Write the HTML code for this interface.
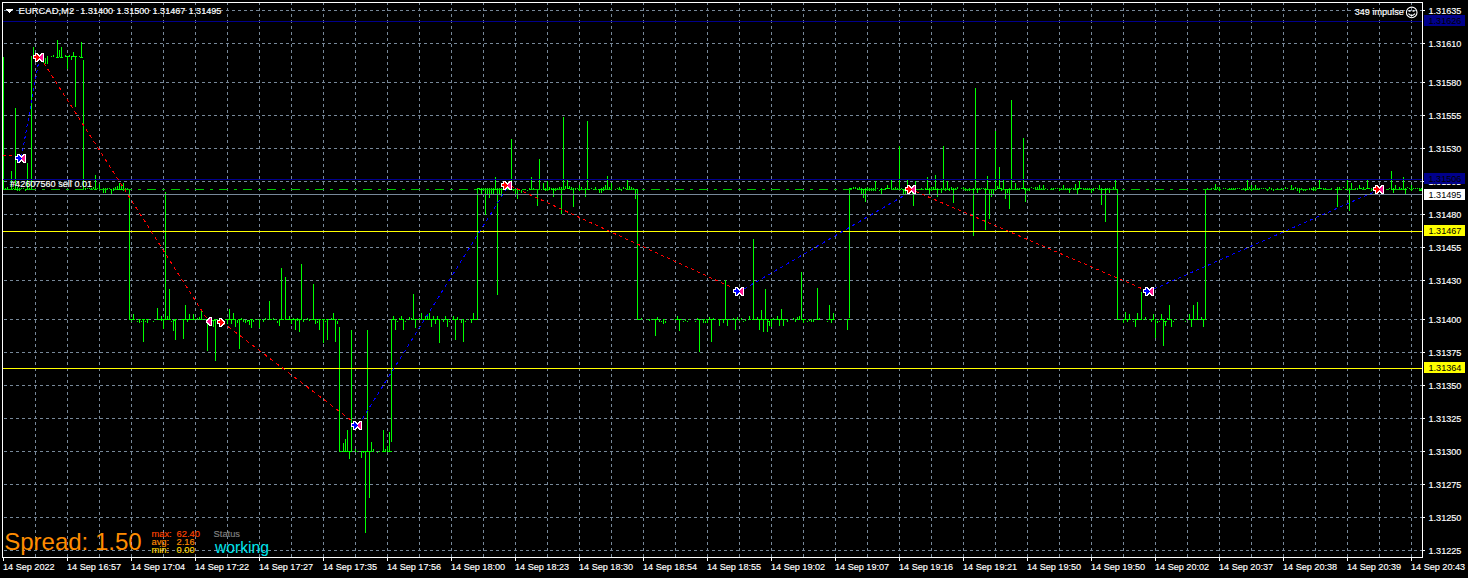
<!DOCTYPE html>
<html lang="en"><head><meta charset="utf-8"><title>EURCAD,M2</title>
<style>
html,body{margin:0;padding:0;background:#000;overflow:hidden}
body{width:1468px;height:578px;position:relative}
svg{position:absolute;left:0;top:0;display:block}
text{font-family:"Liberation Sans",sans-serif;white-space:pre}
</style></head><body>
<svg width="1468" height="578" viewBox="0 0 1468 578" shape-rendering="crispEdges">
<rect width="1468" height="578" fill="#000"/>
<path d="M4 10.5H1422M4 43.5H1422M4 82.5H1422M4 115.5H1422M4 148.5H1422M4 181.5H1422M4 214.5H1422M4 247.5H1422M4 280.5H1422M4 319.5H1422M4 352.5H1422M4 385.5H1422M4 418.5H1422M4 451.5H1422M4 484.5H1422M4 517.5H1422M4 550.5H1422M35.5 2V557M67.5 2V557M99.5 2V557M131.5 2V557M163.5 2V557M195.5 2V557M227.5 2V557M259.5 2V557M291.5 2V557M323.5 2V557M355.5 2V557M387.5 2V557M419.5 2V557M451.5 2V557M483.5 2V557M515.5 2V557M547.5 2V557M579.5 2V557M611.5 2V557M643.5 2V557M675.5 2V557M707.5 2V557M739.5 2V557M771.5 2V557M803.5 2V557M835.5 2V557M867.5 2V557M899.5 2V557M931.5 2V557M963.5 2V557M995.5 2V557M1027.5 2V557M1059.5 2V557M1091.5 2V557M1123.5 2V557M1155.5 2V557M1187.5 2V557M1219.5 2V557M1251.5 2V557M1283.5 2V557M1315.5 2V557M1347.5 2V557M1379.5 2V557M1411.5 2V557" stroke="#778899" stroke-dasharray="3 3" fill="none"/>
<path d="M3.5 57V190M11.5 171V190M15.5 108V190M27.5 163V190M31.5 56V190M33.5 47V57M43.5 58V63M45.5 58V64M47.5 56V64M51.5 56V57M53.5 55V57M57.5 40V58M59.5 50V57M61.5 47V58M65.5 55V57M67.5 56V69M69.5 55V57M71.5 56V60M73.5 52V57M75.5 56V107M79.5 56V57M81.5 42V58M83.5 60V190M95.5 175V190M99.5 184V190M103.5 188V193M105.5 188V193M107.5 188V190M111.5 189V194M113.5 188V191M115.5 187V190M117.5 186V190M119.5 183V190M121.5 185V190M123.5 183V191M125.5 188V190M129.5 189V320M7.5 187V190M17.5 187V191M19.5 188V191M25.5 189V191M29.5 188V190M133.5 314V320M139.5 319V323M143.5 319V342M147.5 319V323M153.5 321V322M157.5 308V320M161.5 316V321M163.5 319V329M165.5 192V320M167.5 316V320M169.5 289V320M173.5 320V331M175.5 319V340M183.5 319V339M185.5 305V320M187.5 319V322M189.5 314V320M193.5 314V320M197.5 318V320M199.5 317V320M201.5 309V320M207.5 319V351M213.5 320V327M215.5 319V361M227.5 319V324M229.5 309V320M231.5 319V324M233.5 313V320M235.5 319V327M237.5 320V323M239.5 319V349M241.5 318V320M243.5 319V322M245.5 320V323M247.5 320V322M249.5 320V325M251.5 319V328M253.5 320V322M259.5 319V328M263.5 319V322M265.5 318V320M269.5 301V320M273.5 318V320M277.5 321V323M279.5 319V326M281.5 268V320M285.5 277V320M289.5 316V320M291.5 319V324M293.5 318V320M295.5 319V330M297.5 318V321M299.5 319V332M301.5 264V320M303.5 319V322M307.5 318V320M313.5 284V320M315.5 319V324M317.5 321V323M319.5 319V330M323.5 319V343M325.5 321V322M327.5 319V340M331.5 318V320M333.5 313V320M335.5 319V342M337.5 321V324M339.5 327V452M343.5 443V452M345.5 439V452M347.5 430V452M349.5 451V459M351.5 330V452M355.5 449V452M361.5 451V458M365.5 451V533M367.5 330V452M369.5 451V498M371.5 442V452M373.5 449V452M377.5 452V453M383.5 430V452M385.5 449V452M387.5 446V452M389.5 432V452M391.5 319V442M393.5 316V320M395.5 319V330M397.5 321V322M399.5 318V320M401.5 316V320M403.5 319V330M405.5 321V322M409.5 317V320M413.5 294V320M415.5 319V328M419.5 318V320M421.5 313V320M425.5 316V320M427.5 314V320M429.5 313V320M431.5 319V327M433.5 316V320M435.5 319V324M437.5 316V320M439.5 319V343M443.5 319V322M445.5 316V320M447.5 319V327M449.5 321V322M453.5 316V320M455.5 319V340M457.5 317V320M461.5 320V323M463.5 319V342M465.5 321V322M471.5 319V323M473.5 313V320M477.5 188V320M481.5 188V195M485.5 188V215M487.5 188V194M489.5 188V198M491.5 188V194M493.5 188V195M495.5 177V190M497.5 188V295M499.5 188V194M501.5 188V197M511.5 139V190M515.5 189V195M517.5 188V199M521.5 190V193M527.5 190V191M529.5 188V190M531.5 177V190M533.5 188V190M537.5 189V206M539.5 159V190M543.5 183V190M545.5 188V191M547.5 181V191M549.5 187V190M553.5 188V197M555.5 188V191M559.5 187V190M561.5 187V214M563.5 117V190M565.5 186V189M567.5 180V189M569.5 186V189M571.5 187V190M573.5 188V207M577.5 188V189M579.5 185V191M581.5 187V190M585.5 188V197M587.5 121V190M595.5 187V190M599.5 189V193M601.5 188V193M603.5 187V191M605.5 185V190M607.5 176V190M609.5 187V190M611.5 183V190M619.5 187V190M623.5 187V189M627.5 180V190M629.5 186V190M631.5 187V190M633.5 188V190M635.5 189V199M637.5 189V320M641.5 318V320M655.5 319V336M657.5 317V320M659.5 319V322M661.5 321V322M663.5 319V324M665.5 321V323M677.5 316V320M679.5 319V331M697.5 318V320M699.5 319V352M703.5 319V323M705.5 321V323M707.5 319V323M709.5 317V320M711.5 319V342M719.5 319V326M723.5 319V323M725.5 280V320M727.5 319V326M733.5 318V320M735.5 319V330M737.5 317V320M741.5 318V320M749.5 316V320M753.5 239V320M757.5 317V320M759.5 319V330M761.5 310V320M763.5 319V332M765.5 289V320M767.5 319V332M769.5 321V326M771.5 319V327M773.5 318V320M777.5 316V320M779.5 319V326M781.5 309V320M783.5 319V326M787.5 319V322M793.5 318V320M795.5 319V322M797.5 317V320M799.5 316V320M801.5 272V320M803.5 319V323M811.5 319V322M813.5 319V322M817.5 288V320M829.5 305V320M831.5 319V323M833.5 313V320M847.5 319V330M849.5 188V318M853.5 187V189M855.5 187V189M859.5 187V190M861.5 188V195M863.5 189V198M865.5 188V202M867.5 187V191M869.5 188V191M871.5 188V191M873.5 188V191M875.5 181V191M877.5 188V189M879.5 190V191M881.5 188V195M887.5 185V189M891.5 180V190M895.5 187V190M897.5 188V190M899.5 146V190M903.5 189V194M905.5 190V195M907.5 180V190M913.5 193V206M915.5 181V190M925.5 188V190M927.5 177V190M929.5 188V194M931.5 187V191M933.5 187V190M935.5 175V190M937.5 188V197M941.5 188V193M943.5 146V190M945.5 188V191M947.5 181V190M949.5 188V191M951.5 187V190M953.5 188V203M965.5 188V191M967.5 189V191M969.5 188V191M973.5 188V236M975.5 88V189M977.5 188V193M985.5 188V230M987.5 176V190M989.5 189V219M991.5 189V197M993.5 189V195M995.5 131V190M997.5 186V189M999.5 167V189M1001.5 188V191M1003.5 180V190M1005.5 189V199M1007.5 189V193M1009.5 188V209M1011.5 100V190M1015.5 183V190M1017.5 188V190M1019.5 188V190M1023.5 138V189M1025.5 188V202M1027.5 188V191M1029.5 188V191M1031.5 187V188M1035.5 187V190M1039.5 185V190M1043.5 185V190M1059.5 188V191M1063.5 185V190M1069.5 188V193M1075.5 184V190M1077.5 188V194M1079.5 181V189M1081.5 188V189M1091.5 189V193M1093.5 188V191M1095.5 188V189M1099.5 185V190M1101.5 188V205M1105.5 188V222M1109.5 188V193M1115.5 180V190M1117.5 189V320M1123.5 319V323M1125.5 312V320M1127.5 319V322M1129.5 314V320M1133.5 321V322M1135.5 319V327M1137.5 313V320M1141.5 292V320M1145.5 317V320M1151.5 319V322M1153.5 314V320M1155.5 319V338M1157.5 321V323M1161.5 314V320M1163.5 319V346M1165.5 321V326M1167.5 318V320M1169.5 305V320M1171.5 319V327M1173.5 321V322M1189.5 314V320M1191.5 319V327M1193.5 305V320M1197.5 302V320M1201.5 317V320M1203.5 319V327M1205.5 189V320M1215.5 184V190M1219.5 187V191M1245.5 188V191M1247.5 180V190M1251.5 185V191M1255.5 185V190M1291.5 185V190M1295.5 187V189M1297.5 188V191M1299.5 188V193M1313.5 187V191M1315.5 187V191M1319.5 180V189M1337.5 187V207M1339.5 187V190M1343.5 187V188M1347.5 180V190M1349.5 188V211M1351.5 183V190M1359.5 185V189M1363.5 187V190M1367.5 180V189M1371.5 188V191M1391.5 171V190M1393.5 188V193M1395.5 185V190M1403.5 177V190M1405.5 188V195M1407.5 187V188M1411.5 185V191M1415.5 188V189M5.5 188V189M9.5 189V190M13.5 188V189M21.5 188V189M23.5 188V189M85.5 188V190M87.5 188V189M89.5 188V189M91.5 188V189M93.5 187V189M97.5 188V189M109.5 188V189M127.5 188V189M131.5 321V322M137.5 321V322M141.5 321V322M145.5 321V322M159.5 319V320M171.5 321V322M181.5 319V320M195.5 319V320M205.5 319V320M209.5 319V320M217.5 319V320M219.5 319V320M221.5 319V320M225.5 319V320M255.5 319V320M257.5 319V320M267.5 319V320M271.5 319V320M275.5 319V320M283.5 319V320M287.5 319V320M305.5 319V320M309.5 319V321M311.5 319V320M357.5 451V452M363.5 451V453M379.5 451V452M407.5 319V320M411.5 318V320M417.5 319V320M423.5 319V320M441.5 319V320M459.5 319V320M467.5 319V320M475.5 319V320M479.5 189V190M483.5 188V190M503.5 188V190M507.5 188V189M509.5 189V190M513.5 189V191M519.5 189V191M523.5 189V190M525.5 189V190M535.5 189V190M541.5 189V190M551.5 188V190M557.5 188V190M575.5 188V190M583.5 189V190M589.5 189V190M591.5 188V189M593.5 189V190M615.5 189V190M617.5 188V189M621.5 189V191M625.5 188V189M647.5 319V320M649.5 319V321M651.5 319V320M653.5 319V320M673.5 319V320M675.5 319V320M681.5 319V320M683.5 321V322M685.5 319V321M687.5 321V322M689.5 319V320M695.5 321V322M701.5 319V320M713.5 318V320M715.5 319V320M721.5 319V320M729.5 319V320M731.5 319V320M739.5 319V321M743.5 321V322M745.5 319V321M755.5 319V320M775.5 319V320M785.5 319V320M805.5 319V320M807.5 321V322M809.5 319V321M819.5 318V320M827.5 321V322M841.5 319V320M851.5 188V189M857.5 188V190M883.5 189V190M885.5 188V190M889.5 188V189M893.5 188V189M901.5 188V189M909.5 188V189M911.5 188V189M917.5 189V190M921.5 188V189M939.5 189V190M955.5 188V189M957.5 187V189M961.5 188V189M963.5 187V189M979.5 188V189M981.5 188V189M983.5 188V189M1021.5 188V189M1033.5 188V189M1037.5 187V189M1041.5 188V189M1045.5 188V189M1047.5 189V190M1051.5 188V189M1053.5 188V190M1055.5 188V189M1057.5 188V189M1061.5 188V189M1065.5 188V189M1067.5 188V189M1071.5 188V189M1073.5 188V190M1083.5 188V189M1085.5 188V189M1087.5 188V189M1089.5 188V189M1097.5 188V189M1103.5 189V190M1107.5 188V189M1111.5 189V190M1113.5 187V189M1143.5 319V320M1149.5 319V320M1159.5 321V322M1175.5 319V320M1183.5 319V320M1185.5 321V322M1195.5 319V320M1199.5 319V320M1207.5 188V189M1209.5 189V190M1211.5 188V189M1213.5 188V189M1217.5 187V189M1223.5 188V189M1225.5 188V189M1229.5 188V189M1231.5 188V190M1233.5 188V189M1235.5 188V189M1237.5 188V189M1239.5 188V189M1241.5 189V190M1243.5 188V189M1249.5 187V189M1253.5 188V189M1257.5 188V189M1259.5 188V189M1261.5 188V189M1263.5 188V189M1265.5 188V189M1267.5 189V191M1269.5 187V189M1271.5 188V190M1273.5 189V191M1275.5 189V190M1277.5 188V189M1279.5 189V190M1281.5 188V189M1285.5 187V189M1287.5 188V189M1293.5 188V190M1301.5 188V189M1303.5 189V191M1305.5 189V191M1307.5 189V190M1309.5 188V190M1311.5 188V190M1317.5 188V189M1321.5 188V189M1323.5 188V189M1325.5 188V189M1327.5 189V190M1329.5 189V190M1331.5 188V189M1335.5 189V190M1341.5 189V190M1345.5 189V190M1353.5 189V190M1355.5 188V190M1357.5 188V190M1361.5 188V189M1365.5 189V190M1369.5 188V189M1373.5 188V189M1375.5 188V189M1377.5 188V189M1379.5 188V189M1381.5 188V189M1383.5 188V189M1387.5 189V190M1389.5 188V189M1397.5 189V190M1399.5 187V189M1401.5 188V189M1409.5 188V189M1413.5 188V189M1417.5 188V189M1419.5 188V189M1421.5 188V189M11 189.5H13M14 189.5H16M15 189.5H17M16 189.5H18M17 189.5H19M26 189.5H28M27 189.5H29M94 189.5H96M95 189.5H97M99 189.5H101M102 189.5H104M103 189.5H105M104 189.5H106M105 189.5H107M110 189.5H112M116 189.5H118M117 189.5H119M118 189.5H120M120 189.5H122M122 189.5H124M123 189.5H125M132 319.5H134M133 319.5H135M138 319.5H140M139 319.5H141M142 319.5H144M143 319.5H145M146 319.5H148M147 319.5H149M156 319.5H158M157 319.5H159M160 319.5H162M161 319.5H163M162 319.5H164M163 319.5H165M166 319.5H168M168 319.5H170M169 319.5H171M173 320.5H175M174 319.5H176M175 319.5H177M182 319.5H184M183 319.5H185M185 319.5H187M188 319.5H190M189 319.5H191M192 319.5H194M193 319.5H195M200 319.5H202M201 319.5H203M206 319.5H208M212 320.5H214M213 320.5H215M214 319.5H216M226 319.5H228M227 319.5H229M228 319.5H230M229 319.5H231M230 319.5H232M232 319.5H234M233 319.5H235M234 319.5H236M238 319.5H240M239 319.5H241M248 320.5H250M250 319.5H252M251 319.5H253M259 319.5H261M269 319.5H271M279 319.5H281M280 319.5H282M281 319.5H283M285 319.5H287M288 319.5H290M289 319.5H291M290 319.5H292M291 319.5H293M294 319.5H296M295 319.5H297M298 319.5H300M299 319.5H301M300 319.5H302M312 319.5H314M313 319.5H315M314 319.5H316M315 319.5H317M318 319.5H320M319 319.5H321M322 319.5H324M323 319.5H325M326 319.5H328M327 319.5H329M332 319.5H334M334 319.5H336M343 451.5H345M344 451.5H346M345 451.5H347M346 451.5H348M348 451.5H350M349 451.5H351M361 451.5H363M364 451.5H366M365 451.5H367M368 451.5H370M370 451.5H372M382 451.5H384M383 451.5H385M387 451.5H389M388 451.5H390M389 451.5H391M392 319.5H394M393 319.5H395M394 319.5H396M400 319.5H402M401 319.5H403M402 319.5H404M413 319.5H415M414 319.5H416M415 319.5H417M421 319.5H423M424 319.5H426M426 319.5H428M427 319.5H429M428 319.5H430M429 319.5H431M430 319.5H432M432 319.5H434M434 319.5H436M435 319.5H437M436 319.5H438M437 319.5H439M438 319.5H440M445 319.5H447M447 319.5H449M452 319.5H454M453 319.5H455M454 319.5H456M455 319.5H457M462 319.5H464M470 319.5H472M471 319.5H473M473 319.5H475M480 189.5H482M481 189.5H483M484 189.5H486M485 189.5H487M487 189.5H489M488 189.5H490M490 189.5H492M491 189.5H493M492 189.5H494M493 189.5H495M495 189.5H497M498 189.5H500M499 189.5H501M500 189.5H502M501 189.5H503M511 189.5H513M514 189.5H516M515 189.5H517M516 189.5H518M517 189.5H519M530 189.5H532M531 189.5H533M536 189.5H538M537 189.5H539M538 189.5H540M543 189.5H545M547 189.5H549M552 189.5H554M553 189.5H555M560 189.5H562M561 189.5H563M562 189.5H564M563 189.5H565M567 188.5H569M572 189.5H574M578 189.5H580M584 189.5H586M585 189.5H587M586 189.5H588M587 189.5H589M598 189.5H600M599 189.5H601M600 189.5H602M602 189.5H604M603 189.5H605M604 189.5H606M605 189.5H607M606 189.5H608M607 189.5H609M610 189.5H612M626 189.5H628M627 189.5H629M628 189.5H630M634 189.5H636M635 189.5H637M654 319.5H656M655 319.5H657M663 319.5H665M676 319.5H678M677 319.5H679M678 319.5H680M679 319.5H681M698 319.5H700M703 319.5H705M706 319.5H708M710 319.5H712M711 319.5H713M718 319.5H720M722 319.5H724M723 319.5H725M724 319.5H726M727 319.5H729M734 319.5H736M749 319.5H751M752 319.5H754M753 319.5H755M758 319.5H760M759 319.5H761M760 319.5H762M762 319.5H764M764 319.5H766M765 319.5H767M766 319.5H768M767 319.5H769M768 321.5H770M770 319.5H772M771 319.5H773M776 319.5H778M777 319.5H779M778 319.5H780M779 319.5H781M780 319.5H782M781 319.5H783M782 319.5H784M783 319.5H785M798 319.5H800M801 319.5H803M802 319.5H804M803 319.5H805M816 319.5H818M817 319.5H819M828 319.5H830M829 319.5H831M830 319.5H832M831 319.5H833M832 319.5H834M833 319.5H835M847 319.5H849M860 189.5H862M861 189.5H863M863 189.5H865M865 189.5H867M866 189.5H868M867 189.5H869M874 189.5H876M880 189.5H882M881 189.5H883M886 188.5H888M887 188.5H889M891 189.5H893M898 189.5H900M899 189.5H901M902 189.5H904M903 189.5H905M904 190.5H906M905 190.5H907M906 189.5H908M912 193.5H914M913 193.5H915M915 189.5H917M926 189.5H928M928 189.5H930M929 189.5H931M930 189.5H932M931 189.5H933M934 189.5H936M935 189.5H937M936 189.5H938M937 189.5H939M940 189.5H942M941 189.5H943M943 189.5H945M946 189.5H948M947 189.5H949M952 189.5H954M953 189.5H955M972 189.5H974M973 189.5H975M976 189.5H978M977 189.5H979M984 189.5H986M985 189.5H987M986 189.5H988M989 189.5H991M990 189.5H992M991 189.5H993M992 189.5H994M993 189.5H995M995 189.5H997M998 188.5H1000M999 188.5H1001M1002 189.5H1004M1003 189.5H1005M1004 189.5H1006M1005 189.5H1007M1006 189.5H1008M1008 189.5H1010M1009 189.5H1011M1010 189.5H1012M1011 189.5H1013M1015 189.5H1017M1022 188.5H1024M1023 188.5H1025M1024 189.5H1026M1039 189.5H1041M1042 189.5H1044M1043 189.5H1045M1062 189.5H1064M1063 189.5H1065M1068 189.5H1070M1069 189.5H1071M1074 189.5H1076M1076 189.5H1078M1077 189.5H1079M1078 188.5H1080M1079 188.5H1081M1090 189.5H1092M1091 189.5H1093M1098 189.5H1100M1100 189.5H1102M1101 189.5H1103M1104 189.5H1106M1105 189.5H1107M1109 189.5H1111M1114 189.5H1116M1115 189.5H1117M1123 319.5H1125M1124 319.5H1126M1125 319.5H1127M1128 319.5H1130M1129 319.5H1131M1134 319.5H1136M1135 319.5H1137M1137 319.5H1139M1140 319.5H1142M1152 319.5H1154M1155 319.5H1157M1160 319.5H1162M1161 319.5H1163M1162 319.5H1164M1164 321.5H1166M1165 321.5H1167M1168 319.5H1170M1169 319.5H1171M1170 319.5H1172M1188 319.5H1190M1189 319.5H1191M1190 319.5H1192M1191 319.5H1193M1192 319.5H1194M1196 319.5H1198M1202 319.5H1204M1203 319.5H1205M1214 189.5H1216M1215 189.5H1217M1219 189.5H1221M1246 189.5H1248M1247 189.5H1249M1250 189.5H1252M1254 189.5H1256M1255 189.5H1257M1290 189.5H1292M1291 189.5H1293M1299 189.5H1301M1312 189.5H1314M1313 189.5H1315M1314 189.5H1316M1315 189.5H1317M1318 188.5H1320M1319 188.5H1321M1336 189.5H1338M1337 189.5H1339M1346 189.5H1348M1347 189.5H1349M1348 189.5H1350M1349 189.5H1351M1351 189.5H1353M1359 188.5H1361M1366 188.5H1368M1367 188.5H1369M1391 189.5H1393M1392 189.5H1394M1393 189.5H1395M1395 189.5H1397M1402 189.5H1404M1403 189.5H1405M1404 189.5H1406M1405 189.5H1407M1411 189.5H1413M56 57.5H59M60 57.5H63M66 56.5H69M72 56.5H77M80 57.5H83M3 189.5H12M128 189.5H130M129 319.5H135M164 319.5H171M189 319.5H195M338 319.5H340M339 451.5H342M390 451.5H392M391 319.5H394M476 319.5H478M477 188.5H480M636 189.5H638M637 319.5H640M848 319.5H850M849 188.5H852M1116 189.5H1118M1117 319.5H1120M1204 319.5H1206M1205 189.5H1208M1395 189.5H1404M1419 190.5H1422" stroke="#00FF00" fill="none"/>
<path d="M3 189.5H12M18 189.5H21M27 189.5H36M42 189.5H45M51 189.5H60M66 189.5H69M75 189.5H84M90 189.5H93M99 189.5H108M114 189.5H117M123 189.5H132M138 189.5H141M147 189.5H156M162 189.5H165M171 189.5H180M186 189.5H189M195 189.5H204M210 189.5H213M219 189.5H228M234 189.5H237M243 189.5H252M258 189.5H261M267 189.5H276M282 189.5H285M291 189.5H300M306 189.5H309M315 189.5H324M330 189.5H333M339 189.5H348M354 189.5H357M363 189.5H372M378 189.5H381M387 189.5H396M402 189.5H405M411 189.5H420M426 189.5H429M435 189.5H444M450 189.5H453M459 189.5H468M474 189.5H477M483 189.5H492M498 189.5H501M507 189.5H516M522 189.5H525M531 189.5H540M546 189.5H549M555 189.5H564M570 189.5H573M579 189.5H588M594 189.5H597M603 189.5H612M618 189.5H621M627 189.5H636M642 189.5H645M651 189.5H660M666 189.5H669M675 189.5H684M690 189.5H693M699 189.5H708M714 189.5H717M723 189.5H732M738 189.5H741M747 189.5H756M762 189.5H765M771 189.5H780M786 189.5H789M795 189.5H804M810 189.5H813M819 189.5H828M834 189.5H837M843 189.5H852M858 189.5H861M867 189.5H876M882 189.5H885M891 189.5H900M906 189.5H909M915 189.5H924M930 189.5H933M939 189.5H948M954 189.5H957M963 189.5H972M978 189.5H981M987 189.5H996M1002 189.5H1005M1011 189.5H1020M1026 189.5H1029M1035 189.5H1044M1050 189.5H1053M1059 189.5H1068M1074 189.5H1077M1083 189.5H1092M1098 189.5H1101M1107 189.5H1116M1122 189.5H1125M1131 189.5H1140M1146 189.5H1149M1155 189.5H1164M1170 189.5H1173M1179 189.5H1188M1194 189.5H1197M1203 189.5H1212M1218 189.5H1221M1227 189.5H1236M1242 189.5H1245M1251 189.5H1260M1266 189.5H1269M1275 189.5H1284M1290 189.5H1293M1299 189.5H1308M1314 189.5H1317M1323 189.5H1332M1338 189.5H1341M1347 189.5H1356M1362 189.5H1365M1371 189.5H1380M1386 189.5H1389M1395 189.5H1404M1410 189.5H1413M1419 189.5H1422" stroke="#00C800" fill="none"/>
<path d="M3 21.5H1422M3 179.5H1422" stroke="#00008B"/>
<path d="M3 231.5H1422M3 368.5H1422" stroke="#FFFF00"/>
<path d="M3 194.5H1422" stroke="#778899"/>
<line x1="3" y1="155.5" x2="13" y2="155.5" stroke="#FF0000" stroke-dasharray="3.000 3.000" stroke-width="1"/>
<line x1="21.5" y1="157" x2="39" y2="60" stroke="#0000FF" stroke-dasharray="3.048 3.048" stroke-width="1"/>
<line x1="40" y1="57" x2="209" y2="322" stroke="#FF0000" stroke-dasharray="3.558 3.558" stroke-width="1"/>
<line x1="222" y1="322" x2="352" y2="421" stroke="#FF0000" stroke-dasharray="3.771 3.771" stroke-width="1"/>
<line x1="362.2" y1="419" x2="508.2" y2="186" stroke="#0000FF" stroke-dasharray="3.540 3.540" stroke-width="1"/>
<line x1="511" y1="186" x2="733" y2="288" stroke="#FF0000" stroke-dasharray="3.302 3.302" stroke-width="1"/>
<line x1="744" y1="289" x2="905" y2="195" stroke="#0000FF" stroke-dasharray="3.474 3.474" stroke-width="1"/>
<line x1="916" y1="191.6" x2="1142" y2="288.6" stroke="#FF0000" stroke-dasharray="3.265 3.265" stroke-width="1"/>
<line x1="1154" y1="289" x2="1374" y2="192" stroke="#0000FF" stroke-dasharray="3.279 3.279" stroke-width="1"/>
<g transform="translate(15 154)"><path d="M2 0h3v1h-3zM8 0h3v1h-3zM2 1h1v1h-1zM4 1h2v1h-2zM7 1h2v1h-2zM10 1h1v1h-1zM0 2h3v1h-3zM5 2h3v1h-3zM10 2h1v1h-1zM0 3h1v1h-1zM6 3h1v1h-1zM10 3h1v1h-1zM0 4h1v1h-1zM10 4h1v1h-1zM0 5h3v1h-3zM6 5h1v1h-1zM10 5h1v1h-1zM2 6h1v1h-1zM5 6h3v1h-3zM10 6h1v1h-1zM2 7h1v1h-1zM4 7h2v1h-2zM7 7h2v1h-2zM10 7h1v1h-1zM2 8h3v1h-3zM8 8h3v1h-3z" fill="#fff"/><path d="M3 1h1v1h-1zM3 2h2v1h-2zM1 3h5v1h-5zM1 4h6v1h-6zM3 5h3v1h-3zM3 6h2v1h-2zM3 7h1v1h-1z" fill="#0000FF"/><path d="M9 1h1v1h-1zM8 2h2v1h-2zM7 3h3v1h-3zM7 4h3v1h-3zM7 5h3v1h-3zM8 6h2v1h-2zM9 7h1v1h-1z" fill="#FF1493"/></g>
<g transform="translate(33 53)"><path d="M2 0h3v1h-3zM8 0h3v1h-3zM2 1h1v1h-1zM4 1h2v1h-2zM7 1h2v1h-2zM10 1h1v1h-1zM0 2h3v1h-3zM5 2h3v1h-3zM10 2h1v1h-1zM0 3h1v1h-1zM6 3h1v1h-1zM10 3h1v1h-1zM0 4h1v1h-1zM10 4h1v1h-1zM0 5h3v1h-3zM6 5h1v1h-1zM10 5h1v1h-1zM2 6h1v1h-1zM5 6h3v1h-3zM10 6h1v1h-1zM2 7h1v1h-1zM4 7h2v1h-2zM7 7h2v1h-2zM10 7h1v1h-1zM2 8h3v1h-3zM8 8h3v1h-3z" fill="#fff"/><path d="M3 1h1v1h-1zM3 2h2v1h-2zM1 3h5v1h-5zM1 4h6v1h-6zM3 5h3v1h-3zM3 6h2v1h-2zM3 7h1v1h-1z" fill="#FF0000"/><path d="M9 1h1v1h-1zM8 2h2v1h-2zM7 3h3v1h-3zM7 4h3v1h-3zM7 5h3v1h-3zM8 6h2v1h-2zM9 7h1v1h-1z" fill="#FF1493"/></g>
<g transform="translate(351 421)"><path d="M2 0h3v1h-3zM8 0h3v1h-3zM2 1h1v1h-1zM4 1h2v1h-2zM7 1h2v1h-2zM10 1h1v1h-1zM0 2h3v1h-3zM5 2h3v1h-3zM10 2h1v1h-1zM0 3h1v1h-1zM6 3h1v1h-1zM10 3h1v1h-1zM0 4h1v1h-1zM10 4h1v1h-1zM0 5h3v1h-3zM6 5h1v1h-1zM10 5h1v1h-1zM2 6h1v1h-1zM5 6h3v1h-3zM10 6h1v1h-1zM2 7h1v1h-1zM4 7h2v1h-2zM7 7h2v1h-2zM10 7h1v1h-1zM2 8h3v1h-3zM8 8h3v1h-3z" fill="#fff"/><path d="M3 1h1v1h-1zM3 2h2v1h-2zM1 3h5v1h-5zM1 4h6v1h-6zM3 5h3v1h-3zM3 6h2v1h-2zM3 7h1v1h-1z" fill="#0000FF"/><path d="M9 1h1v1h-1zM8 2h2v1h-2zM7 3h3v1h-3zM7 4h3v1h-3zM7 5h3v1h-3zM8 6h2v1h-2zM9 7h1v1h-1z" fill="#FF1493"/></g>
<g transform="translate(733 287)"><path d="M2 0h3v1h-3zM8 0h3v1h-3zM2 1h1v1h-1zM4 1h2v1h-2zM7 1h2v1h-2zM10 1h1v1h-1zM0 2h3v1h-3zM5 2h3v1h-3zM10 2h1v1h-1zM0 3h1v1h-1zM6 3h1v1h-1zM10 3h1v1h-1zM0 4h1v1h-1zM10 4h1v1h-1zM0 5h3v1h-3zM6 5h1v1h-1zM10 5h1v1h-1zM2 6h1v1h-1zM5 6h3v1h-3zM10 6h1v1h-1zM2 7h1v1h-1zM4 7h2v1h-2zM7 7h2v1h-2zM10 7h1v1h-1zM2 8h3v1h-3zM8 8h3v1h-3z" fill="#fff"/><path d="M3 1h1v1h-1zM3 2h2v1h-2zM1 3h5v1h-5zM1 4h6v1h-6zM3 5h3v1h-3zM3 6h2v1h-2zM3 7h1v1h-1z" fill="#0000FF"/><path d="M9 1h1v1h-1zM8 2h2v1h-2zM7 3h3v1h-3zM7 4h3v1h-3zM7 5h3v1h-3zM8 6h2v1h-2zM9 7h1v1h-1z" fill="#FF1493"/></g>
<g transform="translate(1143 287)"><path d="M2 0h3v1h-3zM8 0h3v1h-3zM2 1h1v1h-1zM4 1h2v1h-2zM7 1h2v1h-2zM10 1h1v1h-1zM0 2h3v1h-3zM5 2h3v1h-3zM10 2h1v1h-1zM0 3h1v1h-1zM6 3h1v1h-1zM10 3h1v1h-1zM0 4h1v1h-1zM10 4h1v1h-1zM0 5h3v1h-3zM6 5h1v1h-1zM10 5h1v1h-1zM2 6h1v1h-1zM5 6h3v1h-3zM10 6h1v1h-1zM2 7h1v1h-1zM4 7h2v1h-2zM7 7h2v1h-2zM10 7h1v1h-1zM2 8h3v1h-3zM8 8h3v1h-3z" fill="#fff"/><path d="M3 1h1v1h-1zM3 2h2v1h-2zM1 3h5v1h-5zM1 4h6v1h-6zM3 5h3v1h-3zM3 6h2v1h-2zM3 7h1v1h-1z" fill="#0000FF"/><path d="M9 1h1v1h-1zM8 2h2v1h-2zM7 3h3v1h-3zM7 4h3v1h-3zM7 5h3v1h-3zM8 6h2v1h-2zM9 7h1v1h-1z" fill="#FF1493"/></g>
<g transform="translate(501 181)"><path d="M2 0h3v1h-3zM8 0h3v1h-3zM2 1h1v1h-1zM4 1h2v1h-2zM7 1h2v1h-2zM10 1h1v1h-1zM0 2h3v1h-3zM5 2h3v1h-3zM10 2h1v1h-1zM0 3h1v1h-1zM6 3h1v1h-1zM10 3h1v1h-1zM0 4h1v1h-1zM10 4h1v1h-1zM0 5h3v1h-3zM6 5h1v1h-1zM10 5h1v1h-1zM2 6h1v1h-1zM5 6h3v1h-3zM10 6h1v1h-1zM2 7h1v1h-1zM4 7h2v1h-2zM7 7h2v1h-2zM10 7h1v1h-1zM2 8h3v1h-3zM8 8h3v1h-3z" fill="#fff"/><path d="M3 1h1v1h-1zM3 2h2v1h-2zM1 3h5v1h-5zM1 4h6v1h-6zM3 5h3v1h-3zM3 6h2v1h-2zM3 7h1v1h-1z" fill="#FF0000"/><path d="M9 1h1v1h-1zM8 2h2v1h-2zM7 3h3v1h-3zM7 4h3v1h-3zM7 5h3v1h-3zM8 6h2v1h-2zM9 7h1v1h-1z" fill="#FF1493"/></g>
<g transform="translate(905 185)"><path d="M2 0h3v1h-3zM8 0h3v1h-3zM2 1h1v1h-1zM4 1h2v1h-2zM7 1h2v1h-2zM10 1h1v1h-1zM0 2h3v1h-3zM5 2h3v1h-3zM10 2h1v1h-1zM0 3h1v1h-1zM6 3h1v1h-1zM10 3h1v1h-1zM0 4h1v1h-1zM10 4h1v1h-1zM0 5h3v1h-3zM6 5h1v1h-1zM10 5h1v1h-1zM2 6h1v1h-1zM5 6h3v1h-3zM10 6h1v1h-1zM2 7h1v1h-1zM4 7h2v1h-2zM7 7h2v1h-2zM10 7h1v1h-1zM2 8h3v1h-3zM8 8h3v1h-3z" fill="#fff"/><path d="M3 1h1v1h-1zM3 2h2v1h-2zM1 3h5v1h-5zM1 4h6v1h-6zM3 5h3v1h-3zM3 6h2v1h-2zM3 7h1v1h-1z" fill="#FF0000"/><path d="M9 1h1v1h-1zM8 2h2v1h-2zM7 3h3v1h-3zM7 4h3v1h-3zM7 5h3v1h-3zM8 6h2v1h-2zM9 7h1v1h-1z" fill="#FF1493"/></g>
<g transform="translate(1373 185)"><path d="M2 0h3v1h-3zM8 0h3v1h-3zM2 1h1v1h-1zM4 1h2v1h-2zM7 1h2v1h-2zM10 1h1v1h-1zM0 2h3v1h-3zM5 2h3v1h-3zM10 2h1v1h-1zM0 3h1v1h-1zM6 3h1v1h-1zM10 3h1v1h-1zM0 4h1v1h-1zM10 4h1v1h-1zM0 5h3v1h-3zM6 5h1v1h-1zM10 5h1v1h-1zM2 6h1v1h-1zM5 6h3v1h-3zM10 6h1v1h-1zM2 7h1v1h-1zM4 7h2v1h-2zM7 7h2v1h-2zM10 7h1v1h-1zM2 8h3v1h-3zM8 8h3v1h-3z" fill="#fff"/><path d="M3 1h1v1h-1zM3 2h2v1h-2zM1 3h5v1h-5zM1 4h6v1h-6zM3 5h3v1h-3zM3 6h2v1h-2zM3 7h1v1h-1z" fill="#FF0000"/><path d="M9 1h1v1h-1zM8 2h2v1h-2zM7 3h3v1h-3zM7 4h3v1h-3zM7 5h3v1h-3zM8 6h2v1h-2zM9 7h1v1h-1z" fill="#FF1493"/></g>
<g transform="translate(201 317)"><path d="M8 0h3v1h-3zM7 1h2v1h-2zM10 1h1v1h-1zM6 2h2v1h-2zM10 2h1v1h-1zM5 3h2v1h-2zM10 3h1v1h-1zM5 4h1v1h-1zM10 4h1v1h-1zM5 5h2v1h-2zM10 5h1v1h-1zM6 6h2v1h-2zM10 6h1v1h-1zM7 7h2v1h-2zM10 7h1v1h-1zM8 8h3v1h-3z" fill="#fff"/><path d="M9 1h1v1h-1zM8 2h2v1h-2zM7 3h3v1h-3zM6 4h4v1h-4zM7 5h3v1h-3zM8 6h2v1h-2zM9 7h1v1h-1z" fill="#FF1493"/></g>
<g transform="translate(217 318)"><path d="M2 0h3v1h-3zM2 1h1v1h-1zM4 1h2v1h-2zM0 2h3v1h-3zM5 2h2v1h-2zM0 3h1v1h-1zM6 3h2v1h-2zM0 4h1v1h-1zM7 4h1v1h-1zM0 5h3v1h-3zM6 5h2v1h-2zM2 6h1v1h-1zM5 6h2v1h-2zM2 7h1v1h-1zM4 7h2v1h-2zM2 8h3v1h-3z" fill="#fff"/><path d="M3 1h1v1h-1zM3 2h2v1h-2zM1 3h5v1h-5zM1 4h6v1h-6zM3 5h3v1h-3zM3 6h2v1h-2zM3 7h1v1h-1z" fill="#FF0000"/></g>
<path d="M2.5 2V558M2 2.5H1423M1422.5 2V558M2 557.5H1423" stroke="#fff" fill="none"/>
<path d="M1423 10.5h2M1423 43.5h2M1423 82.5h2M1423 115.5h2M1423 148.5h2M1423 181.5h2M1423 214.5h2M1423 247.5h2M1423 280.5h2M1423 319.5h2M1423 352.5h2M1423 385.5h2M1423 418.5h2M1423 451.5h2M1423 484.5h2M1423 517.5h2M1423 550.5h2M3.5 558v3M67.5 558v3M131.5 558v3M195.5 558v3M259.5 558v3M323.5 558v3M387.5 558v3M451.5 558v3M515.5 558v3M579.5 558v3M643.5 558v3M707.5 558v3M771.5 558v3M835.5 558v3M899.5 558v3M963.5 558v3M1027.5 558v3M1091.5 558v3M1155.5 558v3M1219.5 558v3M1283.5 558v3M1347.5 558v3M1411.5 558v3" stroke="#fff" fill="none"/>
<path d="M6 9h7l-3.5 4z" fill="#fff" shape-rendering="crispEdges"/>
<g shape-rendering="auto" fill="none" stroke="#fff" stroke-width="1.1"><circle cx="1411.7" cy="12.4" r="5.3"/><path d="M1408.4 13.7Q1411.7 17.4 1415 13.7" stroke-width="1.2"/><rect x="1408.6" y="10.1" width="2" height="1.6" fill="#fff" stroke="none"/><rect x="1412.5" y="10.1" width="2" height="1.6" fill="#fff" stroke="none"/></g>
<g>
<text x="1428.5" y="13.5" font-size="9.1" fill="#fff" stroke="#fff" stroke-width="0.15" text-anchor="start">1.31635</text>
<text x="1428.5" y="46.5" font-size="9.1" fill="#fff" stroke="#fff" stroke-width="0.15" text-anchor="start">1.31610</text>
<text x="1428.5" y="85.5" font-size="9.1" fill="#fff" stroke="#fff" stroke-width="0.15" text-anchor="start">1.31580</text>
<text x="1428.5" y="118.5" font-size="9.1" fill="#fff" stroke="#fff" stroke-width="0.15" text-anchor="start">1.31555</text>
<text x="1428.5" y="151.5" font-size="9.1" fill="#fff" stroke="#fff" stroke-width="0.15" text-anchor="start">1.31530</text>
<text x="1428.5" y="184.5" font-size="9.1" fill="#fff" stroke="#fff" stroke-width="0.15" text-anchor="start">1.31505</text>
<text x="1428.5" y="217.5" font-size="9.1" fill="#fff" stroke="#fff" stroke-width="0.15" text-anchor="start">1.31480</text>
<text x="1428.5" y="250.5" font-size="9.1" fill="#fff" stroke="#fff" stroke-width="0.15" text-anchor="start">1.31455</text>
<text x="1428.5" y="283.5" font-size="9.1" fill="#fff" stroke="#fff" stroke-width="0.15" text-anchor="start">1.31430</text>
<text x="1428.5" y="322.5" font-size="9.1" fill="#fff" stroke="#fff" stroke-width="0.15" text-anchor="start">1.31400</text>
<text x="1428.5" y="355.5" font-size="9.1" fill="#fff" stroke="#fff" stroke-width="0.15" text-anchor="start">1.31375</text>
<text x="1428.5" y="388.5" font-size="9.1" fill="#fff" stroke="#fff" stroke-width="0.15" text-anchor="start">1.31350</text>
<text x="1428.5" y="421.5" font-size="9.1" fill="#fff" stroke="#fff" stroke-width="0.15" text-anchor="start">1.31325</text>
<text x="1428.5" y="454.5" font-size="9.1" fill="#fff" stroke="#fff" stroke-width="0.15" text-anchor="start">1.31300</text>
<text x="1428.5" y="487.5" font-size="9.1" fill="#fff" stroke="#fff" stroke-width="0.15" text-anchor="start">1.31275</text>
<text x="1428.5" y="520.5" font-size="9.1" fill="#fff" stroke="#fff" stroke-width="0.15" text-anchor="start">1.31250</text>
<text x="1428.5" y="553.5" font-size="9.1" fill="#fff" stroke="#fff" stroke-width="0.15" text-anchor="start">1.31225</text>
<rect x="1424" y="15" width="41" height="11" fill="#00008B"/>
<rect x="1424" y="173" width="41" height="11" fill="#00008B"/>
<rect x="1424" y="189" width="41" height="11" fill="#fff"/>
<rect x="1424" y="225" width="41" height="11" fill="#FFFF00"/>
<rect x="1424" y="362" width="41" height="11" fill="#FFFF00"/>
<text x="1428.5" y="23.5" font-size="9.1" fill="#000" stroke="#000" stroke-width="0" text-anchor="start">1.31626</text>
<text x="1428.5" y="181.5" font-size="9.1" fill="#000" stroke="#000" stroke-width="0" text-anchor="start">1.31506</text>
<text x="1428.5" y="197.5" font-size="9.1" fill="#000" stroke="#000" stroke-width="0" text-anchor="start">1.31495</text>
<text x="1428.5" y="233.5" font-size="9.1" fill="#000" stroke="#000" stroke-width="0" text-anchor="start">1.31467</text>
<text x="1428.5" y="370.5" font-size="9.1" fill="#000" stroke="#000" stroke-width="0" text-anchor="start">1.31364</text>
<text x="3" y="570" font-size="9.1" fill="#fff" stroke="#fff" stroke-width="0.15" text-anchor="start">14 Sep 2022</text>
<text x="67" y="570" font-size="9.1" fill="#fff" stroke="#fff" stroke-width="0.15" text-anchor="start">14 Sep 16:57</text>
<text x="131" y="570" font-size="9.1" fill="#fff" stroke="#fff" stroke-width="0.15" text-anchor="start">14 Sep 17:04</text>
<text x="195" y="570" font-size="9.1" fill="#fff" stroke="#fff" stroke-width="0.15" text-anchor="start">14 Sep 17:22</text>
<text x="259" y="570" font-size="9.1" fill="#fff" stroke="#fff" stroke-width="0.15" text-anchor="start">14 Sep 17:27</text>
<text x="323" y="570" font-size="9.1" fill="#fff" stroke="#fff" stroke-width="0.15" text-anchor="start">14 Sep 17:35</text>
<text x="387" y="570" font-size="9.1" fill="#fff" stroke="#fff" stroke-width="0.15" text-anchor="start">14 Sep 17:56</text>
<text x="451" y="570" font-size="9.1" fill="#fff" stroke="#fff" stroke-width="0.15" text-anchor="start">14 Sep 18:00</text>
<text x="515" y="570" font-size="9.1" fill="#fff" stroke="#fff" stroke-width="0.15" text-anchor="start">14 Sep 18:23</text>
<text x="579" y="570" font-size="9.1" fill="#fff" stroke="#fff" stroke-width="0.15" text-anchor="start">14 Sep 18:30</text>
<text x="643" y="570" font-size="9.1" fill="#fff" stroke="#fff" stroke-width="0.15" text-anchor="start">14 Sep 18:54</text>
<text x="707" y="570" font-size="9.1" fill="#fff" stroke="#fff" stroke-width="0.15" text-anchor="start">14 Sep 18:55</text>
<text x="771" y="570" font-size="9.1" fill="#fff" stroke="#fff" stroke-width="0.15" text-anchor="start">14 Sep 19:02</text>
<text x="835" y="570" font-size="9.1" fill="#fff" stroke="#fff" stroke-width="0.15" text-anchor="start">14 Sep 19:07</text>
<text x="899" y="570" font-size="9.1" fill="#fff" stroke="#fff" stroke-width="0.15" text-anchor="start">14 Sep 19:16</text>
<text x="963" y="570" font-size="9.1" fill="#fff" stroke="#fff" stroke-width="0.15" text-anchor="start">14 Sep 19:21</text>
<text x="1027" y="570" font-size="9.1" fill="#fff" stroke="#fff" stroke-width="0.15" text-anchor="start">14 Sep 19:50</text>
<text x="1091" y="570" font-size="9.1" fill="#fff" stroke="#fff" stroke-width="0.15" text-anchor="start">14 Sep 19:50</text>
<text x="1155" y="570" font-size="9.1" fill="#fff" stroke="#fff" stroke-width="0.15" text-anchor="start">14 Sep 20:02</text>
<text x="1219" y="570" font-size="9.1" fill="#fff" stroke="#fff" stroke-width="0.15" text-anchor="start">14 Sep 20:37</text>
<text x="1283" y="570" font-size="9.1" fill="#fff" stroke="#fff" stroke-width="0.15" text-anchor="start">14 Sep 20:38</text>
<text x="1347" y="570" font-size="9.1" fill="#fff" stroke="#fff" stroke-width="0.15" text-anchor="start">14 Sep 20:39</text>
<text x="1411" y="570" font-size="9.1" fill="#fff" stroke="#fff" stroke-width="0.15" text-anchor="start">14 Sep 20:43</text>
<text x="18.6" y="14" font-size="9.1" fill="#fff" stroke="#fff" stroke-width="0.15" text-anchor="start"><tspan font-size="9.45">EURCAD,M2</tspan> <tspan x="80.3">1.31400</tspan> <tspan x="116.5">1.31500</tspan> <tspan x="152.5">1.31467</tspan> <tspan x="188.5">1.31495</tspan></text>
<text x="1403.8" y="15" font-size="9.1" fill="#fff" stroke="#fff" stroke-width="0.15" text-anchor="end">349 impulse</text>
<text x="10" y="186.6" font-size="9.15" fill="#fff" stroke="#fff" stroke-width="0.15" text-anchor="start">#42607560 sell 0.01</text>
<text x="4.2" y="550.2" font-size="24" fill="#FF8C00" stroke="#FF8C00" stroke-width="0" text-anchor="start">Spread: 1.50</text>
<text x="151.5" y="537" font-size="9.333" fill="#FF4500" stroke="#FF4500" stroke-width="0.15" text-anchor="start">max:</text>
<text x="176.5" y="537" font-size="9.333" fill="#FF4500" stroke="#FF4500" stroke-width="0.15" text-anchor="start">62.40</text>
<text x="151.5" y="545" font-size="9.333" fill="#FF8C00" stroke="#FF8C00" stroke-width="0.15" text-anchor="start">avg:</text>
<text x="176.5" y="545" font-size="9.333" fill="#FF8C00" stroke="#FF8C00" stroke-width="0.15" text-anchor="start">2.16</text>
<text x="151.5" y="553" font-size="9.333" fill="#FFD700" stroke="#FFD700" stroke-width="0.15" text-anchor="start">min:</text>
<text x="176.5" y="553" font-size="9.333" fill="#FFD700" stroke="#FFD700" stroke-width="0.15" text-anchor="start">0.00</text>
<text x="213.6" y="537" font-size="9.333" fill="#808080" stroke="#808080" stroke-width="0.15" text-anchor="start">Status</text>
<text x="215" y="553" font-size="15.7" fill="#00E5EE" stroke="#00E5EE" stroke-width="0" text-anchor="start">working</text>
</g>
</svg>
</body></html>
